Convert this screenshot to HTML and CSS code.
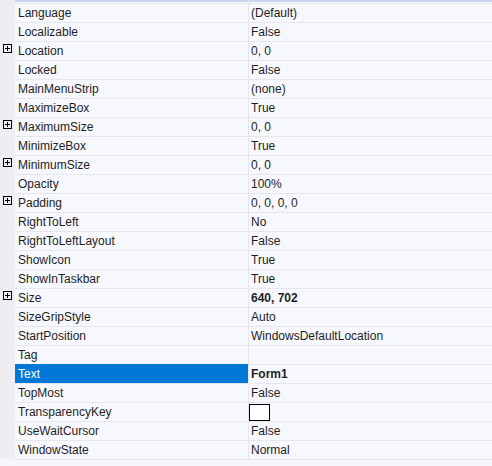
FILE: index.html
```html
<!DOCTYPE html>
<html>
<head>
<meta charset="utf-8">
<link rel="stylesheet" href="styles.css">
</head>
<body>
<div class="grid">
  <div class="row top"><div class="gutter"></div><div class="name"></div><div class="value"></div></div>
  <div class="row"><div class="gutter"></div><div class="name">Language</div><div class="value">(Default)</div></div>
  <div class="row"><div class="gutter"></div><div class="name">Localizable</div><div class="value">False</div></div>
  <div class="row"><div class="gutter"><svg class="plus" width="9" height="9" viewBox="0 0 9 9"><rect x="0.5" y="0.5" width="8" height="8" fill="none" stroke="#000"/><path d="M2 4.5H7M4.5 2V7" stroke="#000"/></svg></div><div class="name">Location</div><div class="value">0, 0</div></div>
  <div class="row"><div class="gutter"></div><div class="name">Locked</div><div class="value">False</div></div>
  <div class="row"><div class="gutter"></div><div class="name">MainMenuStrip</div><div class="value">(none)</div></div>
  <div class="row"><div class="gutter"></div><div class="name">MaximizeBox</div><div class="value">True</div></div>
  <div class="row"><div class="gutter"><svg class="plus" width="9" height="9" viewBox="0 0 9 9"><rect x="0.5" y="0.5" width="8" height="8" fill="none" stroke="#000"/><path d="M2 4.5H7M4.5 2V7" stroke="#000"/></svg></div><div class="name">MaximumSize</div><div class="value">0, 0</div></div>
  <div class="row"><div class="gutter"></div><div class="name">MinimizeBox</div><div class="value">True</div></div>
  <div class="row"><div class="gutter"><svg class="plus" width="9" height="9" viewBox="0 0 9 9"><rect x="0.5" y="0.5" width="8" height="8" fill="none" stroke="#000"/><path d="M2 4.5H7M4.5 2V7" stroke="#000"/></svg></div><div class="name">MinimumSize</div><div class="value">0, 0</div></div>
  <div class="row"><div class="gutter"></div><div class="name">Opacity</div><div class="value">100%</div></div>
  <div class="row"><div class="gutter"><svg class="plus" width="9" height="9" viewBox="0 0 9 9"><rect x="0.5" y="0.5" width="8" height="8" fill="none" stroke="#000"/><path d="M2 4.5H7M4.5 2V7" stroke="#000"/></svg></div><div class="name">Padding</div><div class="value">0, 0, 0, 0</div></div>
  <div class="row"><div class="gutter"></div><div class="name">RightToLeft</div><div class="value">No</div></div>
  <div class="row"><div class="gutter"></div><div class="name">RightToLeftLayout</div><div class="value">False</div></div>
  <div class="row"><div class="gutter"></div><div class="name">ShowIcon</div><div class="value">True</div></div>
  <div class="row"><div class="gutter"></div><div class="name">ShowInTaskbar</div><div class="value">True</div></div>
  <div class="row"><div class="gutter"><svg class="plus" width="9" height="9" viewBox="0 0 9 9"><rect x="0.5" y="0.5" width="8" height="8" fill="none" stroke="#000"/><path d="M2 4.5H7M4.5 2V7" stroke="#000"/></svg></div><div class="name">Size</div><div class="value bold">640, 702</div></div>
  <div class="row"><div class="gutter"></div><div class="name">SizeGripStyle</div><div class="value">Auto</div></div>
  <div class="row"><div class="gutter"></div><div class="name">StartPosition</div><div class="value">WindowsDefaultLocation</div></div>
  <div class="row"><div class="gutter"></div><div class="name">Tag</div><div class="value"></div></div>
  <div class="row"><div class="gutter"></div><div class="name selected">Text</div><div class="value bold">Form1</div></div>
  <div class="row"><div class="gutter"></div><div class="name">TopMost</div><div class="value">False</div></div>
  <div class="row"><div class="gutter"></div><div class="name">TransparencyKey</div><div class="value swatch-cell"><span class="swatch"></span></div></div>
  <div class="row"><div class="gutter"></div><div class="name">UseWaitCursor</div><div class="value">False</div></div>
  <div class="row"><div class="gutter"></div><div class="name">WindowState</div><div class="value">Normal</div></div>
  <div class="footer"></div>
</div>
</body>
</html>
```

FILE: styles.css
```css
html, body {
  margin: 0;
  padding: 0;
}
body {
  width: 492px;
  height: 466px;
  overflow: hidden;
  background: #f5f6fa;
  font-family: "Liberation Sans", Arial, sans-serif;
  font-size: 12px;
  color: #1e1e1e;
}
.grid {
  display: flex;
  flex-direction: column;
}
.row {
  display: flex;
  height: 19px;
}
.row.top {
  height: 3px;
}
.gutter {
  width: 15px;
  flex: none;
  background: #eeeef2;
  box-sizing: border-box;
  padding: 3px 0 0 3px;
}
.plus {
  display: block;
}
.name, .value {
  box-sizing: border-box;
  border-top: 1px solid #e6e7ed;
  background: #f7f8fd;
  line-height: 18px;
  white-space: nowrap;
  overflow: hidden;
}
.top .name, .top .value {
  border-top: 0;
  background: linear-gradient(#c9d2ee 2px, #f7f8fd 2px);
}
.name {
  width: 233px;
  flex: none;
  padding-left: 3px;
}
.value {
  flex: 1;
  border-left: 1px solid #e6e7ed;
  padding-left: 2px;
}
.name.selected {
  background: #0078d7;
  border-top-color: #0078d7;
  color: #ffffff;
}
.bold {
  font-weight: bold;
}
.swatch-cell {
  padding-left: 0;
  padding-top: 1px;
}
.swatch {
  display: block;
  width: 21px;
  height: 17px;
  box-sizing: border-box;
  border: 1px solid #000;
  background: #ffffff;
}
.footer {
  margin-left: 15px;
  border-top: 1px solid #e6e7ed;
  height: 6px;
}
```
